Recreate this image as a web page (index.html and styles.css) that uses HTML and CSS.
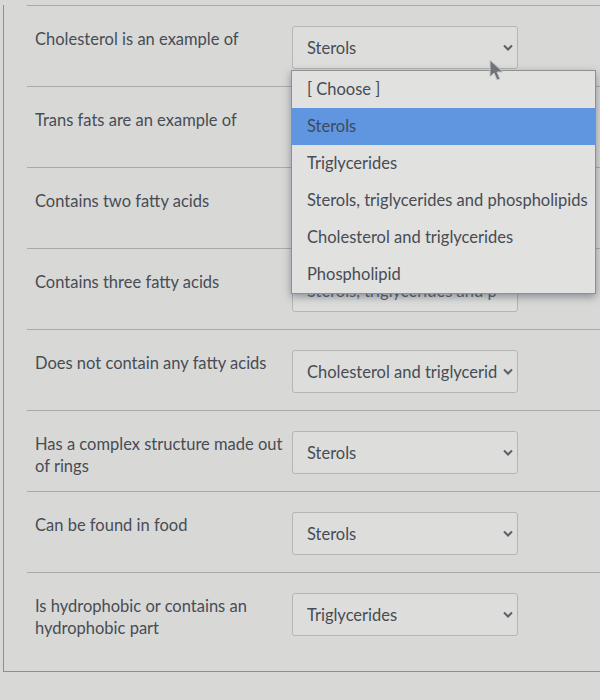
FILE: index.html
```html
<!DOCTYPE html>
<html lang="en">
<head>
  <meta charset="UTF-8">
  <title>Matching question</title>
  <link rel="stylesheet" href="styles.css">
</head>
<body>
<div class="quiz">
  <div class="row">
    <div class="label">Cholesterol is an example of</div>
    <div class="answer">
      <div class="select">
        <span>Sterols</span>
        <svg class="chev" width="10" height="7" viewBox="0 0 10 7"><path d="M1 1.5 L5 5.5 L9 1.5" fill="none" stroke="#5a5f68" stroke-width="2"/></svg>
      </div>
      <ul class="menu">
        <li>[ Choose ]</li>
        <li class="active">Sterols</li>
        <li>Triglycerides</li>
        <li>Sterols, triglycerides and phospholipids</li>
        <li>Cholesterol and triglycerides</li>
        <li>Phospholipid</li>
      </ul>
      <svg class="cursor" width="16" height="24" viewBox="0 0 16 24"><path d="M1 1 L1 18 L5 14 L8 21 L11 20 L8 13 L14 13 Z" fill="#6f737a" stroke="#c9c9c9" stroke-width="1"/></svg>
    </div>
  </div>

  <div class="row">
    <div class="label">Trans fats are an example of</div>
    <div class="answer">
      <div class="select"></div>
    </div>
  </div>

  <div class="row">
    <div class="label">Contains two fatty acids</div>
    <div class="answer">
      <div class="select"></div>
    </div>
  </div>

  <div class="row">
    <div class="label">Contains three fatty acids</div>
    <div class="answer">
      <div class="select"><span class="faded">Sterols, triglycerides and p</span></div>
    </div>
  </div>

  <div class="row">
    <div class="label">Does not contain any fatty acids</div>
    <div class="answer">
      <div class="select">
        <span>Cholesterol and triglycerid</span>
        <svg class="chev" width="10" height="7" viewBox="0 0 10 7"><path d="M1 1.5 L5 5.5 L9 1.5" fill="none" stroke="#5a5f68" stroke-width="2"/></svg>
      </div>
    </div>
  </div>

  <div class="row">
    <div class="label">Has a complex structure made out of rings</div>
    <div class="answer">
      <div class="select">
        <span>Sterols</span>
        <svg class="chev" width="10" height="7" viewBox="0 0 10 7"><path d="M1 1.5 L5 5.5 L9 1.5" fill="none" stroke="#5a5f68" stroke-width="2"/></svg>
      </div>
    </div>
  </div>

  <div class="row">
    <div class="label">Can be found in food</div>
    <div class="answer">
      <div class="select">
        <span>Sterols</span>
        <svg class="chev" width="10" height="7" viewBox="0 0 10 7"><path d="M1 1.5 L5 5.5 L9 1.5" fill="none" stroke="#5a5f68" stroke-width="2"/></svg>
      </div>
    </div>
  </div>

  <div class="row last">
    <div class="label">Is hydrophobic or contains an hydrophobic part</div>
    <div class="answer">
      <div class="select">
        <span>Triglycerides</span>
        <svg class="chev" width="10" height="7" viewBox="0 0 10 7"><path d="M1 1.5 L5 5.5 L9 1.5" fill="none" stroke="#5a5f68" stroke-width="2"/></svg>
      </div>
    </div>
  </div>
</div>
</body>
</html>
```

FILE: styles.css
```css
body {
  margin: 0;
  font-family: Lato, "Open Sans", sans-serif;
  background-color: #d8d9d7;
  color: #474c55;
  font-size: 16.5px;
}
.quiz {
  margin-top: 5px;
  margin-left: 3px;
  padding-left: 23px;
  border-left: 1px solid #8e8f8e;
  border-bottom: 1px solid #8e8f8e;
  height: 667px;
  box-sizing: border-box;
}
.row {
  display: flex;
  align-items: flex-start;
  height: 81px;
  box-sizing: border-box;
  border-top: 1px solid #a9aaa9;
  padding-top: 20px;
}
.row.last {
  height: auto;
}
.label {
  width: 250px;
  padding-left: 8px;
  margin-right: 7px;
  padding-top: 2px;
  line-height: 22px;
}
.answer {
  position: relative;
}
.select {
  width: 226px;
  height: 43px;
  box-sizing: border-box;
  border: 1px solid #b4b5b4;
  border-radius: 3px;
  background-color: #dddedc;
  display: flex;
  align-items: center;
  justify-content: space-between;
  padding: 0 4px 0 14px;
  white-space: nowrap;
  overflow: hidden;
}
.faded {
  color: #5c6270;
}
.chev {
  flex: none;
}
.menu {
  position: absolute;
  top: 44px;
  left: -1px;
  width: 303px;
  margin: 0;
  padding: 0;
  list-style: none;
  background-color: #e1e1e0;
  border: 1px solid #8f9090;
  box-shadow: 0 3px 8px rgba(40, 50, 70, 0.45);
  z-index: 2;
}
.menu li {
  height: 37px;
  line-height: 36px;
  padding-left: 15px;
  white-space: nowrap;
}
.menu li.active {
  background-color: #5f96df;
  color: #3d4a5e;
}
.cursor {
  position: absolute;
  top: 33px;
  left: 197px;
  z-index: 3;
}
```
